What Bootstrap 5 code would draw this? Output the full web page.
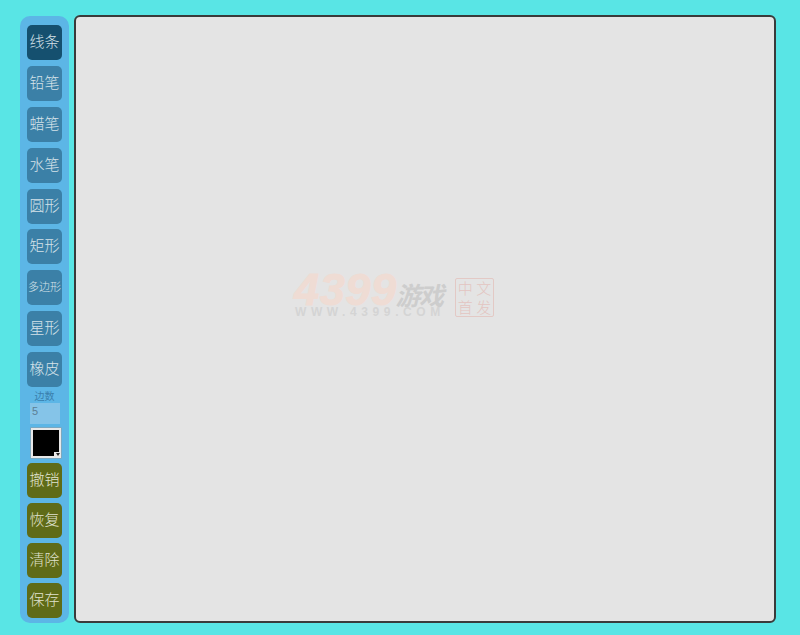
<!DOCTYPE html>
<html lang="zh">
<head>
<meta charset="utf-8">
<title>画板</title>
<link href="https://cdn.jsdelivr.net/npm/bootstrap@5.3.0/dist/css/bootstrap.min.css" rel="stylesheet">
<style>
html,body{height:100%;}
body{background:#59e5e5;font-family:"Noto Sans CJK SC",sans-serif;overflow:hidden;}
.stage{width:800px;height:635px;padding:15px 24px 12px 20px;gap:5px;}
.toolbar{width:49px;margin-top:1px;background:#5cb6e6;border-radius:10px;padding:9px 7px 5px;}
.tool{width:35px;height:35px;padding:0 0 3px;border:0;border-radius:5px;font-size:15px;font-weight:300;line-height:32px;color:#d5e2e9;background:#3b80a7;white-space:nowrap;text-align:center;}
.tool.tight{font-size:11px;letter-spacing:0;}
.tool.on{background:#15506f;}
.tool.act{background:#5f6b17;color:#e0e2cf;}
.tools{gap:5.9px;}
.acts{gap:5px;}
.lbl{font-size:10px;line-height:12px;color:#3a80ad;margin-top:3px;margin-bottom:0;}
.sides{width:30px;height:21px;margin:1px 0 4px 3px;padding:0 2px 6px;border:0;border-radius:0;background:#85c4e8;color:#5c7f95;font-size:11px;font-family:"Liberation Sans",sans-serif;}
.swatch{width:30px;height:30px;margin:0 0 5px 4px;border:2px solid #e8e8e8;background:#000;box-shadow:0 0 0 .5px #999;}
.swatch::after{content:"";position:absolute;right:-2px;bottom:-2px;width:7px;height:6px;background:#e8e8e8;}
.swatch::before{content:"";position:absolute;right:-1px;bottom:0;z-index:1;border-left:2.5px solid transparent;border-right:2.5px solid transparent;border-top:3px solid #222;}
.board{width:702px;height:608px;background:#e4e4e4;border:2px solid #3a3a3a;border-radius:6px;padding:254px 0 0 218px;}
.wm{gap:10px;}
.wm-num{font-family:"Liberation Sans",sans-serif;font-weight:700;font-style:italic;font-size:45px;line-height:38px;color:#efdcd4;letter-spacing:.6px;-webkit-text-stroke:1px #efdcd4;}
.wm-cn{font-size:25px;font-weight:700;font-style:italic;line-height:30px;color:#cdcdcd;letter-spacing:-1.5px;margin-left:-1px;}
.wm-url{font-family:"Liberation Sans",sans-serif;font-size:12px;line-height:12px;letter-spacing:4.6px;color:#d4d4d4;font-weight:700;margin:-3px 0 0 1px;white-space:nowrap;}
.wm-stamp{width:39px;height:39px;border:1px solid #e3c9c5;border-radius:2px;display:grid;grid-template-columns:1fr 1fr;font-size:15px;line-height:18.5px;color:#e3c5c1;text-align:center;font-weight:300;margin-top:7px;}
</style>
</head>
<body>
<div class="stage d-flex align-items-start">
  <aside class="toolbar d-flex flex-column">
    <div class="tools d-flex flex-column">
      <button class="btn tool on">线条</button>
      <button class="btn tool">铅笔</button>
      <button class="btn tool">蜡笔</button>
      <button class="btn tool">水笔</button>
      <button class="btn tool">圆形</button>
      <button class="btn tool">矩形</button>
      <button class="btn tool tight">多边形</button>
      <button class="btn tool">星形</button>
      <button class="btn tool">橡皮</button>
    </div>
    <label class="lbl text-center" for="sides">边数</label>
    <input id="sides" class="form-control sides" value="5">
    <div class="swatch position-relative"></div>
    <div class="acts d-flex flex-column">
      <button class="btn tool act">撤销</button>
      <button class="btn tool act">恢复</button>
      <button class="btn tool act">清除</button>
      <button class="btn tool act">保存</button>
    </div>
  </aside>
  <main class="board">
    <div class="wm d-flex align-items-start">
      <div>
        <div class="d-flex align-items-end">
          <span class="wm-num">4399</span><span class="wm-cn">游戏</span>
        </div>
        <div class="wm-url">WWW.4399.COM</div>
      </div>
      <div class="wm-stamp"><span>中</span><span>文</span><span>首</span><span>发</span></div>
    </div>
  </main>
</div>
<script src="https://cdn.jsdelivr.net/npm/bootstrap@5.3.0/dist/js/bootstrap.bundle.min.js"></script>
</body>
</html>
